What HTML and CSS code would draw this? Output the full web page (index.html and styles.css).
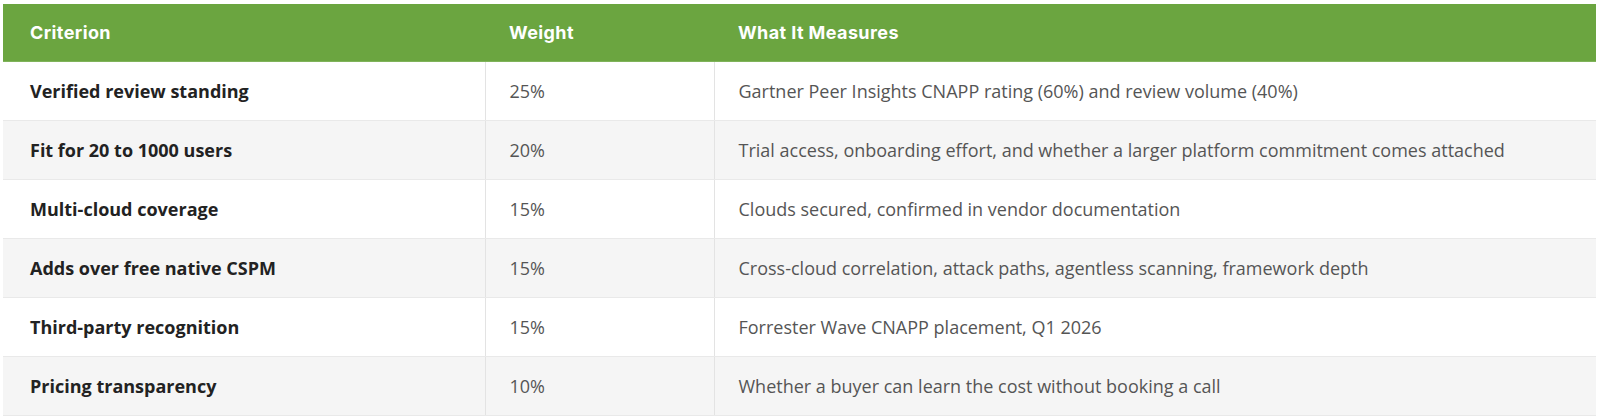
FILE: index.html
```html
<!DOCTYPE html>
<html lang="en">
<head>
<meta charset="utf-8">
<title>Criteria</title>
<link rel="stylesheet" href="styles.css">
</head>
<body>
<div class="wrap">
<table class="criteria">
  <colgroup>
    <col class="c1"><col class="c2"><col class="c3">
  </colgroup>
  <thead>
    <tr><th>Criterion</th><th>Weight</th><th>What It Measures</th></tr>
  </thead>
  <tbody>
    <tr><td class="name">Verified review standing</td><td>25%</td><td>Gartner Peer Insights CNAPP rating (60%) and review volume (40%)</td></tr>
    <tr><td class="name">Fit for 20 to 1000 users</td><td>20%</td><td>Trial access, onboarding effort, and whether a larger platform commitment comes attached</td></tr>
    <tr><td class="name">Multi-cloud coverage</td><td>15%</td><td>Clouds secured, confirmed in vendor documentation</td></tr>
    <tr><td class="name">Adds over free native CSPM</td><td>15%</td><td>Cross-cloud correlation, attack paths, agentless scanning, framework depth</td></tr>
    <tr><td class="name">Third-party recognition</td><td>15%</td><td>Forrester Wave CNAPP placement, Q1 2026</td></tr>
    <tr><td class="name">Pricing transparency</td><td>10%</td><td>Whether a buyer can learn the cost without booking a call</td></tr>
  </tbody>
</table>
</div>
</body>
</html>
```
FILE: styles.css
```css
html, body { margin: 0; padding: 0; background: #ffffff; }
.wrap { padding: 4px 4px 0 3px; }
.criteria {
  width: 100%;
  border-collapse: collapse;
  table-layout: fixed;
  font-family: "Open Sans", "Liberation Sans", sans-serif;
  font-size: 18px;
}
.c1 { width: 482px; }
.c2 { width: 229px; }
.criteria thead th {
  background: #6ba540;
  color: #ffffff;
  font-family: "Inter", "Open Sans", sans-serif;
  font-weight: 700;
  font-size: 18px;
  letter-spacing: 0.4px;
  text-align: left;
  height: 57px;
  padding: 0 24px;
  border-bottom: 1px solid #7fb35a;
}
.criteria thead th:first-child { padding-left: 27px; }
.criteria td {
  height: 58px;
  padding: 0 24px;
  color: #555555;
  border-bottom: 1px solid #e9e9e9;
  border-left: 1px solid #e3e3e3;
  vertical-align: middle;
}
.criteria td:first-child { border-left: none; padding-left: 27px; }
.criteria td.name { font-weight: 700; color: #222222; }
.criteria tbody tr:nth-child(even) td { background: #f5f5f5; }
```
